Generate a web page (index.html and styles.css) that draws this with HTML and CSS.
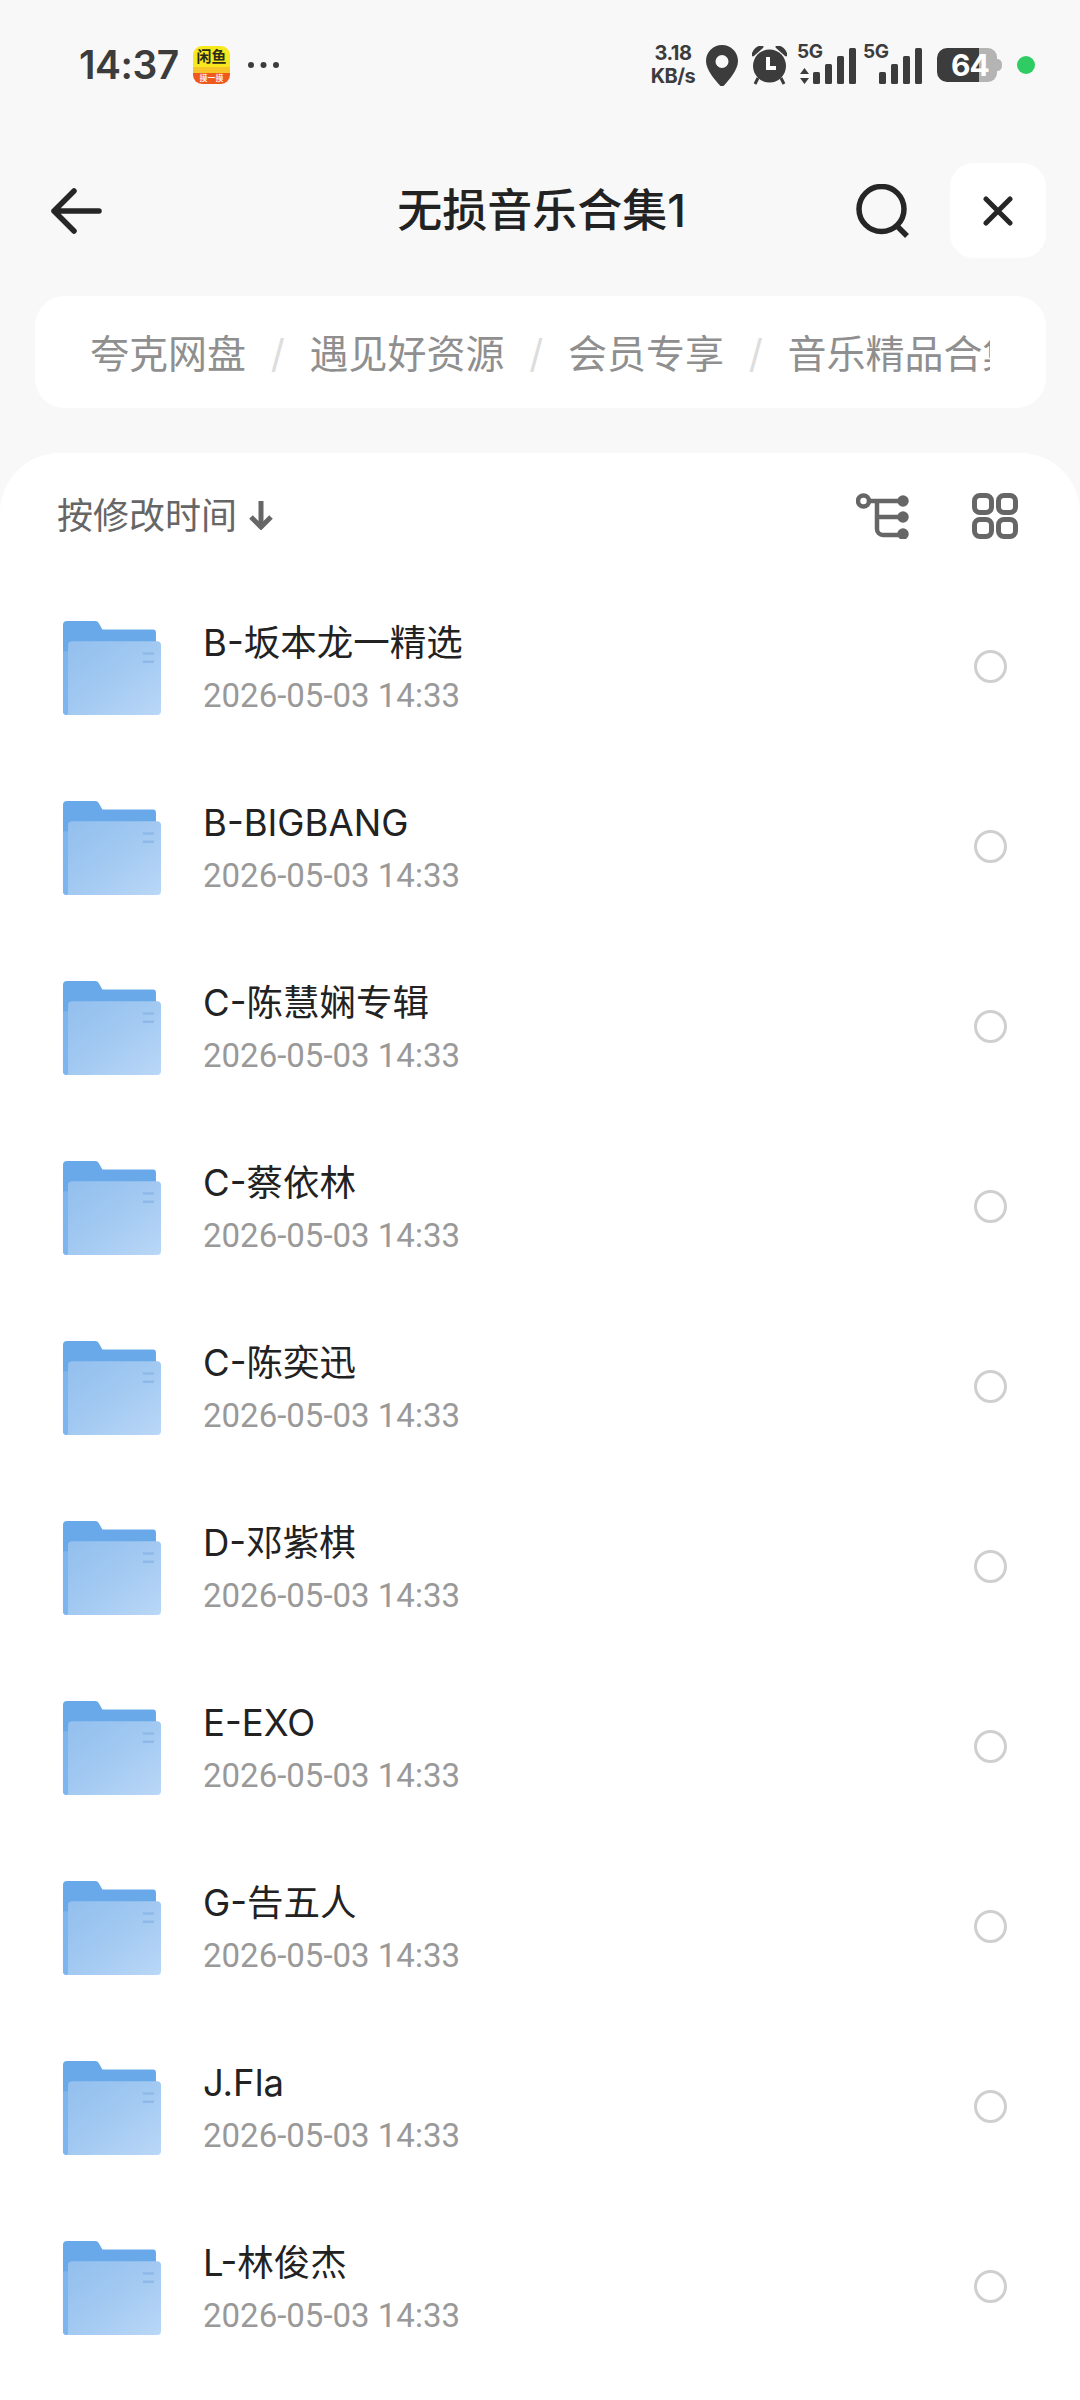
FILE: index.html
```html
<!DOCTYPE html>
<html lang="zh-CN">
<head>
<meta charset="utf-8">
<title>无损音乐合集1</title>
<link rel="stylesheet" href="styles.css">
</head>
<body>
<svg class="defs" width="0" height="0" aria-hidden="true">
  <defs>
    <linearGradient id="fg" x1="0" y1="0" x2="1" y2="1">
      <stop offset="0" stop-color="#93bfee"/>
      <stop offset=".45" stop-color="#a0c8f1"/>
      <stop offset="1" stop-color="#bad7f7"/>
    </linearGradient>
    <symbol id="folder" viewBox="0 0 97 93">
      <path d="M0 4a4 4 0 0 1 4-4h28a4 4 0 0 1 3.500 2.200L39 8.500h50a3 3 0 0 1 3 3V60H20V93H4a4 4 0 0 1-4-4z" fill="#6aa9e9"/>
      <path d="M0 30H8V93H4a4 4 0 0 1-4-4z" fill="#7db6ef"/>
      <path d="M5 24a4 4 0 0 1 4-4h84a4 4 0 0 1 4 4v65a4 4 0 0 1-4 4H4a4 4 0 0 0 1-4z" fill="url(#fg)"/>
      <path d="M79 31h11v2.500H79zM79 39h11v2.500H79z" fill="#8fb9e8"/>
    </symbol>
  </defs>
</svg>

<header class="status">
  <div class="status-left">
    <span class="time">14:37</span>
    <span class="app-icon"><span class="app-top">闲鱼</span><span class="app-bottom">摸一摸</span></span>
    <svg class="dots" width="32" height="8" viewBox="0 0 32 8"><circle cx="4" cy="4" r="3" /><circle cx="16.500" cy="4" r="3"/><circle cx="29" cy="4" r="3"/></svg>
  </div>
  <div class="status-right">
    <div class="speed"><span>3.18</span><span>KB/s</span></div>
    <svg class="pin" width="32" height="41" viewBox="0 0 32 41"><path fill-rule="evenodd" d="M16 0C7 0 0 7 0 16c0 9 9 19 14 24.500a2.500 2.500 0 0 0 4 0C23 35 32 25 32 16 32 7 25 0 16 0zm0 10a6.500 6.500 0 1 1 0 13 6.500 6.500 0 0 1 0-13z"/></svg>
    <svg class="alarm" width="35" height="39" viewBox="0 0 35 39"><path d="M1 9 C2 4 6 1 10 1L1 9zM34 9C33 4 29 1 25 1l9 8z" stroke="#3c3c3c" stroke-width="3" stroke-linejoin="round"/><circle cx="17.500" cy="20" r="16.500"/><path d="M6 32l-3 6M29 32l3 6" stroke="#3c3c3c" stroke-width="3" fill="none"/><path d="M16 11v11h8" stroke="#fff" stroke-width="4" fill="none"/></svg>
    <div class="net">
      <span class="g">5G</span>
      <svg width="60" height="38" viewBox="0 0 60 38"><path d="M7.500 20l4.500 6H3zM7.500 36L3 30h9z"/><rect x="16" y="24" width="7" height="12" rx="1.500"/><rect x="28" y="16" width="7" height="20" rx="1.500"/><rect x="40" y="8" width="7" height="28" rx="1.500"/><rect x="52" y="0" width="7" height="36" rx="1.500"/></svg>
    </div>
    <div class="net net2">
      <span class="g">5G</span>
      <svg width="60" height="38" viewBox="0 0 60 38"><rect x="16" y="24" width="7" height="12" rx="1.500"/><rect x="28" y="16" width="7" height="20" rx="1.500"/><rect x="40" y="8" width="7" height="28" rx="1.500"/><rect x="52" y="0" width="7" height="36" rx="1.500"/></svg>
    </div>
    <div class="battery">
      <svg width="65" height="34" viewBox="0 0 65 34"><path d="M32 0h19a9 9 0 0 1 9 9v16a9 9 0 0 1-9 9H32z" fill="#b4b4b4"/><path d="M60 11c3 0 5 2 5 6s-2 6-5 6z" fill="#b4b4b4"/><path d="M10 0h32v34H10A10 10 0 0 1 0 24V10A10 10 0 0 1 10 0z" fill="#3c3c3c"/></svg>
      <span class="level">64</span>
    </div>
    <span class="dot"></span>
  </div>
</header>

<nav class="topbar">
  <button class="icon-btn back" aria-label="返回">
    <svg width="52" height="46" viewBox="0 0 52 46" fill="none" stroke="#262626" stroke-width="5.500" stroke-linecap="round" stroke-linejoin="round"><path d="M24 3 4 23l20 20M4 23h45"/></svg>
  </button>
  <h1 class="title">无损音乐合集1</h1>
  <div class="top-actions">
    <button class="icon-btn search" aria-label="搜索">
      <svg width="54" height="54" viewBox="0 0 54 54" fill="none" stroke="#262626" stroke-width="5.500"><circle cx="25.500" cy="25" r="22.500"/><path d="M40 41 51 52"/></svg>
    </button>
    <button class="icon-btn close" aria-label="关闭">
      <svg width="30" height="30" viewBox="0 0 30 30" fill="none" stroke="#262626" stroke-width="5" stroke-linecap="round"><path d="M3 3l24 24M27 3 3 27"/></svg>
    </button>
  </div>
</nav>

<div class="crumbs">
  <div class="crumbs-inner">
    <span>夸克网盘</span><i>/</i><span>遇见好资源</span><i>/</i><span>会员专享</span><i>/</i><span>音乐精品合集</span>
  </div>
</div>

<main class="sheet">
  <div class="toolbar">
    <div class="sort">
      <span>按修改时间</span>
      <svg width="24" height="29" viewBox="0 0 24 29" fill="none" stroke="#666" stroke-width="5"><path d="M12 0v25"/><path d="M2 16l10 10 10-10" stroke-linejoin="miter"/></svg>
    </div>
    <div class="views">
      <svg width="54" height="46" viewBox="0 0 54 46" fill="none" stroke="#666" stroke-width="4.500" stroke-linecap="round"><circle cx="7.500" cy="8" r="5.500"/><path d="M14 8h32M21 8v28a6 6 0 0 0 6 6h19M21 24h25"/><circle cx="47" cy="8" r="3.500" fill="#666"/><circle cx="47" cy="24" r="3.500" fill="#666"/><circle cx="47" cy="41" r="3.500" fill="#666"/></svg>
      <svg width="46" height="46" viewBox="0 0 46 46" fill="none" stroke="#666" stroke-width="5"><rect x="2.500" y="2.500" width="17" height="17" rx="5.500"/><rect x="26.500" y="2.500" width="17" height="17" rx="5.500"/><rect x="2.500" y="26.500" width="17" height="17" rx="5.500"/><rect x="26.500" y="26.500" width="17" height="17" rx="5.500"/></svg>
    </div>
  </div>
  <ul class="list">
    <li class="row"><svg class="folder"><use href="#folder"/></svg><div class="info"><div class="name">B-坂本龙一精选</div><div class="date">2026-05-03 14:33</div></div><span class="radio"></span></li>
    <li class="row"><svg class="folder"><use href="#folder"/></svg><div class="info"><div class="name">B-BIGBANG</div><div class="date">2026-05-03 14:33</div></div><span class="radio"></span></li>
    <li class="row"><svg class="folder"><use href="#folder"/></svg><div class="info"><div class="name">C-陈慧娴专辑</div><div class="date">2026-05-03 14:33</div></div><span class="radio"></span></li>
    <li class="row"><svg class="folder"><use href="#folder"/></svg><div class="info"><div class="name">C-蔡依林</div><div class="date">2026-05-03 14:33</div></div><span class="radio"></span></li>
    <li class="row"><svg class="folder"><use href="#folder"/></svg><div class="info"><div class="name">C-陈奕迅</div><div class="date">2026-05-03 14:33</div></div><span class="radio"></span></li>
    <li class="row"><svg class="folder"><use href="#folder"/></svg><div class="info"><div class="name">D-邓紫棋</div><div class="date">2026-05-03 14:33</div></div><span class="radio"></span></li>
    <li class="row"><svg class="folder"><use href="#folder"/></svg><div class="info"><div class="name">E-EXO</div><div class="date">2026-05-03 14:33</div></div><span class="radio"></span></li>
    <li class="row"><svg class="folder"><use href="#folder"/></svg><div class="info"><div class="name">G-告五人</div><div class="date">2026-05-03 14:33</div></div><span class="radio"></span></li>
    <li class="row"><svg class="folder"><use href="#folder"/></svg><div class="info"><div class="name">J.Fla</div><div class="date">2026-05-03 14:33</div></div><span class="radio"></span></li>
    <li class="row"><svg class="folder"><use href="#folder"/></svg><div class="info"><div class="name">L-林俊杰</div><div class="date">2026-05-03 14:33</div></div><span class="radio"></span></li>
  </ul>
</main>
</body>
</html>
```

FILE: styles.css
```css
* { box-sizing: border-box; }
html, body { margin: 0; padding: 0; }
body {
  width: 1080px;
  height: 2400px;
  overflow: hidden;
  background: #f8f8f8;
  font-family: Inter, "Noto Sans CJK SC", sans-serif;
  color: #222;
}
.defs { position: absolute; }

.status {
  height: 130px;
  display: flex;
  justify-content: space-between;
  align-items: center;
  padding: 0 45px 0 79px;
}
.status svg { fill: #3c3c3c; display: block; }
.status-left { display: flex; align-items: center; }
.time { width: 98px; font-size: 39px; font-weight: 600; color: #3c3c3c; letter-spacing: -.5px; line-height: 50px; white-space: nowrap; }
.app-icon {
  width: 37px; height: 38px; margin-left: 16px; border-radius: 9px; overflow: hidden;
  display: flex; flex-direction: column; align-items: center;
  background: linear-gradient(#f6e81c 0 55%, #f7c52a 55% 72%, #ee5a1c 72%);
}
.app-top { font: 700 15px/19px "Noto Sans CJK SC", sans-serif; color: #2b2b1a; }
.app-bottom { margin-top: 8px; font: 500 8px/10px "Noto Sans CJK SC", sans-serif; color: #fff; }
.dots { margin-left: 17px; }
.status-right { display: flex; align-items: center; }
.speed {
  display: flex; flex-direction: column; align-items: center;
  width: 46px; margin-right: -2px; font-size: 20px; font-weight: 700; line-height: 23px; color: #3c3c3c;
  white-space: nowrap; letter-spacing: -.5px;
}
.pin { margin-left: 12px; }
.alarm { margin-left: 14px; }
.net { position: relative; margin-left: 10px; width: 60px; height: 38px; margin-top: 3px; }
.net2 { margin-left: 6px; }
.g { position: absolute; left: 0; top: -6px; font-size: 19px; font-weight: 700; line-height: 20px; color: #3c3c3c; letter-spacing: -.3px; }
.battery { position: relative; margin-left: 14px; width: 65px; height: 34px; }
.level { position: absolute; left: 14px; top: -3px; font-size: 30px; font-weight: 700; line-height: 40px; color: #fff; letter-spacing: -1px; }
.dot { width: 18px; height: 18px; border-radius: 50%; background: #2ecc63; margin-left: 15px; }

.topbar {
  height: 95px;
  margin-top: 33px;
  display: flex;
  align-items: center;
  justify-content: space-between;
  position: relative;
  padding: 0 34px 0 50px;
}
.icon-btn { border: 0; background: none; padding: 0; display: flex; align-items: center; justify-content: center; }
.title {
  position: absolute; left: 0; right: 0; top: 0; margin: 0 0 0 3px;
  text-align: center; font-size: 45px; font-weight: 500; line-height: 95px; color: #222;
  pointer-events: none;
}
.top-actions { display: flex; align-items: center; gap: 40px; }
.close { width: 96px; height: 95px; background: #fff; border-radius: 24px; }

.crumbs {
  height: 112px;
  margin: 38px 34px 0 35px;
  background: #fff;
  border-radius: 30px;
  padding: 0 56px 0 55px;
  display: flex;
  align-items: center;
}
.crumbs-inner {
  overflow: hidden;
  white-space: nowrap;
  font-size: 39px;
  line-height: 56px;
  color: #8f8f8f;
  width: 100%;
  font-family: "Noto Sans CJK SC", sans-serif;
}
.crumbs-inner i { display: inline-block; width: 63.500px; text-align: center; font-style: normal; color: #ddd; font-family: Inter, sans-serif; }

.sheet {
  margin-top: 45px;
  height: 1947px;
  background: #fff;
  border-radius: 60px 60px 0 0;
  overflow: hidden;
}
.toolbar {
  height: 125px;
  padding: 0 62px 6px 57px;
  display: flex;
  align-items: center;
  justify-content: space-between;
}
.sort { display: flex; align-items: center; gap: 12px; font-size: 36px; line-height: 50px; color: #666; font-family: "Noto Sans CJK SC", sans-serif; }
.sort svg { margin-top: 6px; }
.views { display: flex; align-items: center; gap: 62px; margin-top: 6px; }
.views svg { display: block; }

.list { list-style: none; margin: 0; padding: 0; }
.row { height: 180px; display: flex; align-items: center; padding: 0 73px 0 61px; }
.folder { width: 102px; height: 94px; flex: none; }
.info { flex: 1; margin-left: 40px; margin-top: -2px; }
.name { font-size: 36.500px; line-height: 50px; color: #222; }
.date { font-family: Roboto, sans-serif; font-size: 33px; line-height: 42px; color: #999; margin-top: 7px; }
.radio { width: 33px; height: 33px; border: 3px solid #cfcfcf; border-radius: 50%; flex: none; margin-top: -3px; }
```
